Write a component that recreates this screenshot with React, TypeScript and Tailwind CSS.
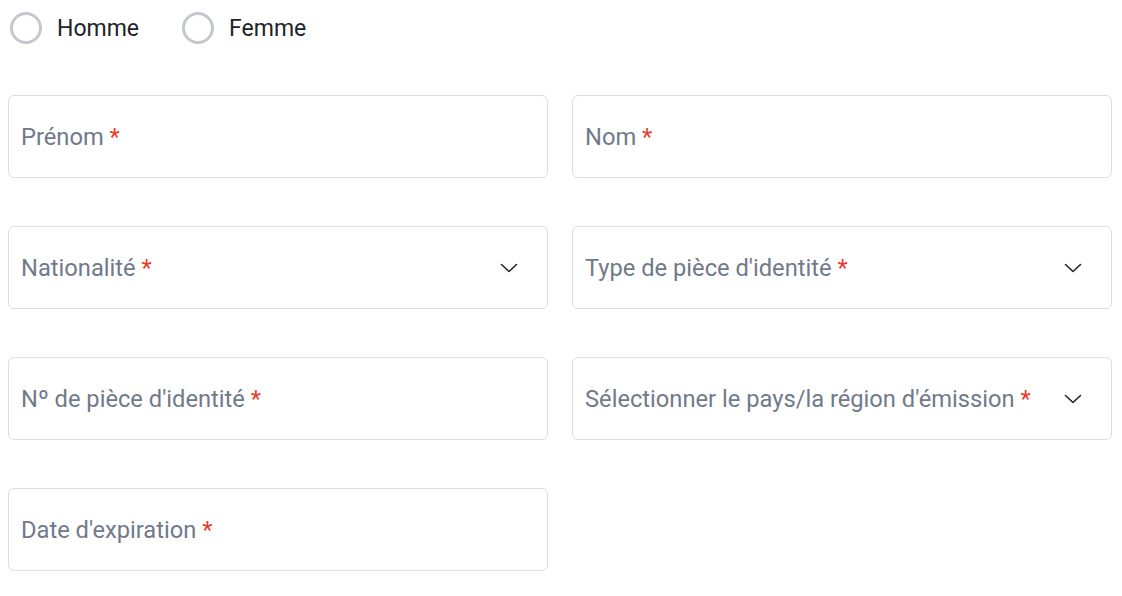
import React from "react";

function Chevron() {
  return (
    <svg width="20" height="20" viewBox="0 0 20 20" fill="none" className="shrink-0">
      <path d="M2.5 6.5 L10 13.5 L17.5 6.5" stroke="#1e2329" strokeWidth="1.6" strokeLinecap="round" strokeLinejoin="round" />
    </svg>
  );
}

function Field({ label, select }: { label: string; select?: boolean }) {
  return (
    <div className="h-[83px] rounded-[6px] border border-[#dcdee2] flex items-center pl-[12px] pr-[28px] bg-white">
      <div className="flex-1 text-[23.7px] text-[#707a8a] leading-none whitespace-nowrap pt-[2px]">
        {label} <span className="text-[#ec3a2c]">*</span>
      </div>
      {select && <Chevron />}
    </div>
  );
}

function Radio({ label }: { label: string }) {
  return (
    <div className="flex items-center gap-[15px]">
      <div className="w-[32px] h-[32px] rounded-full border-[3px] border-[#c4c7cc]" />
      <span className="text-[23px] text-[#1e2329] leading-none pt-[1px]">{label}</span>
    </div>
  );
}

export default function App() {
  return (
    <div className="w-[1122px] h-[596px] bg-white" style={{ fontFamily: "Roboto, 'Noto Sans', sans-serif" }}>
      <div className="px-[8px] pt-[12px]">
        <div className="flex items-center gap-[43px] pl-[2px] h-[32px]">
          <Radio label="Homme" />
          <Radio label="Femme" />
        </div>
        <div className="grid grid-cols-2 gap-x-[24px] gap-y-[48px] mt-[51px] w-[1104px]">
          <Field label="Prénom" />
          <Field label="Nom" />
          <Field label="Nationalité" select />
          <Field label="Type de pièce d'identité" select />
          <Field label="Nº de pièce d'identité" />
          <Field label="Sélectionner le pays/la région d'émission" select />
          <Field label="Date d'expiration" />
        </div>
      </div>
    </div>
  );
}
